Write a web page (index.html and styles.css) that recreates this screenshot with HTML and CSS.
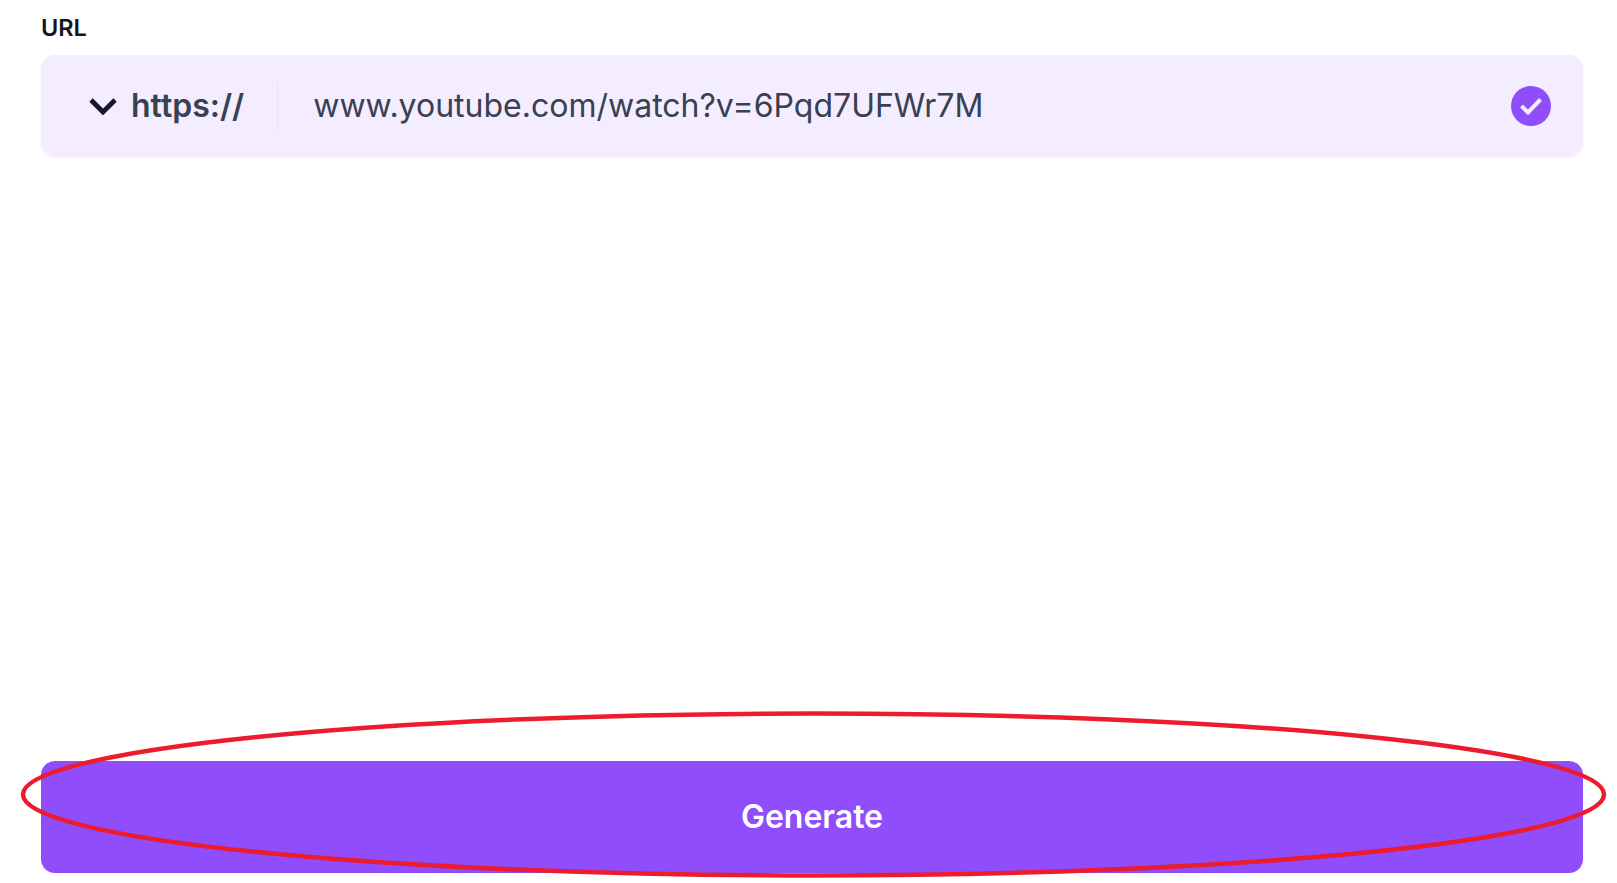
FILE: index.html
```html
<!DOCTYPE html>
<html lang="en">
<head>
    <meta charset="UTF-8">
    <meta name="viewport" content="width=device-width, initial-scale=1.0">
    <title>Generate from URL</title>
    <link rel="stylesheet" href="styles.css">
</head>
<body>
    <form class="page">
        <div class="field">
            <label class="field-label">URL</label>
            <div class="url-box">
                <div class="protocol">
                    <svg class="chevron" width="28" height="18" viewBox="0 0 28 18"><path d="M2 3 14 15 26 3" fill="none" stroke="#17172b" stroke-width="4.8"/></svg>
                    <span>https://</span>
                </div>
                <div class="url-text">www.youtube.com/watch?v=6Pqd7UFWr7M</div>
                <svg class="check" width="40" height="40" viewBox="0 0 40 40"><circle cx="20" cy="20" r="20" fill="#8f4dfb"/><path d="M10.5 20 17 26.5 29.5 13.5" fill="none" stroke="#f6edff" stroke-width="4"/></svg>
            </div>
        </div>
        <button class="generate" type="button">Generate</button>
    </form>
    <!-- red annotation drawn on top of the screenshot -->
    <svg class="annotation" width="1617" height="883" viewBox="0 0 1617 883"><ellipse cx="813.5" cy="794.5" rx="790.5" ry="81" fill="none" stroke="#ec1c2e" stroke-width="4.5"/></svg>
</body>
</html>
```

FILE: styles.css
```css
* {
    box-sizing: border-box;
}
body {
    font-family: Inter, "Liberation Sans", sans-serif;
    margin: 0;
    background-color: white;
}
.page {
    height: 883px;
    padding: 15px 34px 10px 41px;
    display: flex;
    flex-direction: column;
    justify-content: space-between;
}
.field-label {
    display: block;
    font-size: 23.5px;
    line-height: 26px;
    font-weight: 600;
    color: #14141f;
    margin-bottom: 14px;
}
.url-box {
    height: 102px;
    padding: 0 32px 0 48px;
    display: flex;
    align-items: center;
    background-color: #f4ecff;
    border-radius: 14px;
    box-shadow: 0 1px 2px rgba(90,60,160,0.06);
}
.protocol {
    display: flex;
    align-items: center;
    gap: 14px;
    height: 50px;
    margin-bottom: 1px;
    padding-right: 33px;
    border-right: 1px solid #ebe4f8;
    font-size: 32px;
    font-weight: 600;
    color: #374151;
}
.url-text {
    flex: 1;
    margin-left: 35px;
    margin-bottom: 2px;
    font-size: 32px;
    color: #374151;
}
.generate {
    height: 112px;
    padding-bottom: 3px;
    border: none;
    border-radius: 14px;
    background-color: #8f4dfb;
    color: white;
    font-family: inherit;
    font-size: 32px;
    font-weight: 600;
}
.annotation {
    position: absolute;
    top: 0;
    left: 0;
}
```
